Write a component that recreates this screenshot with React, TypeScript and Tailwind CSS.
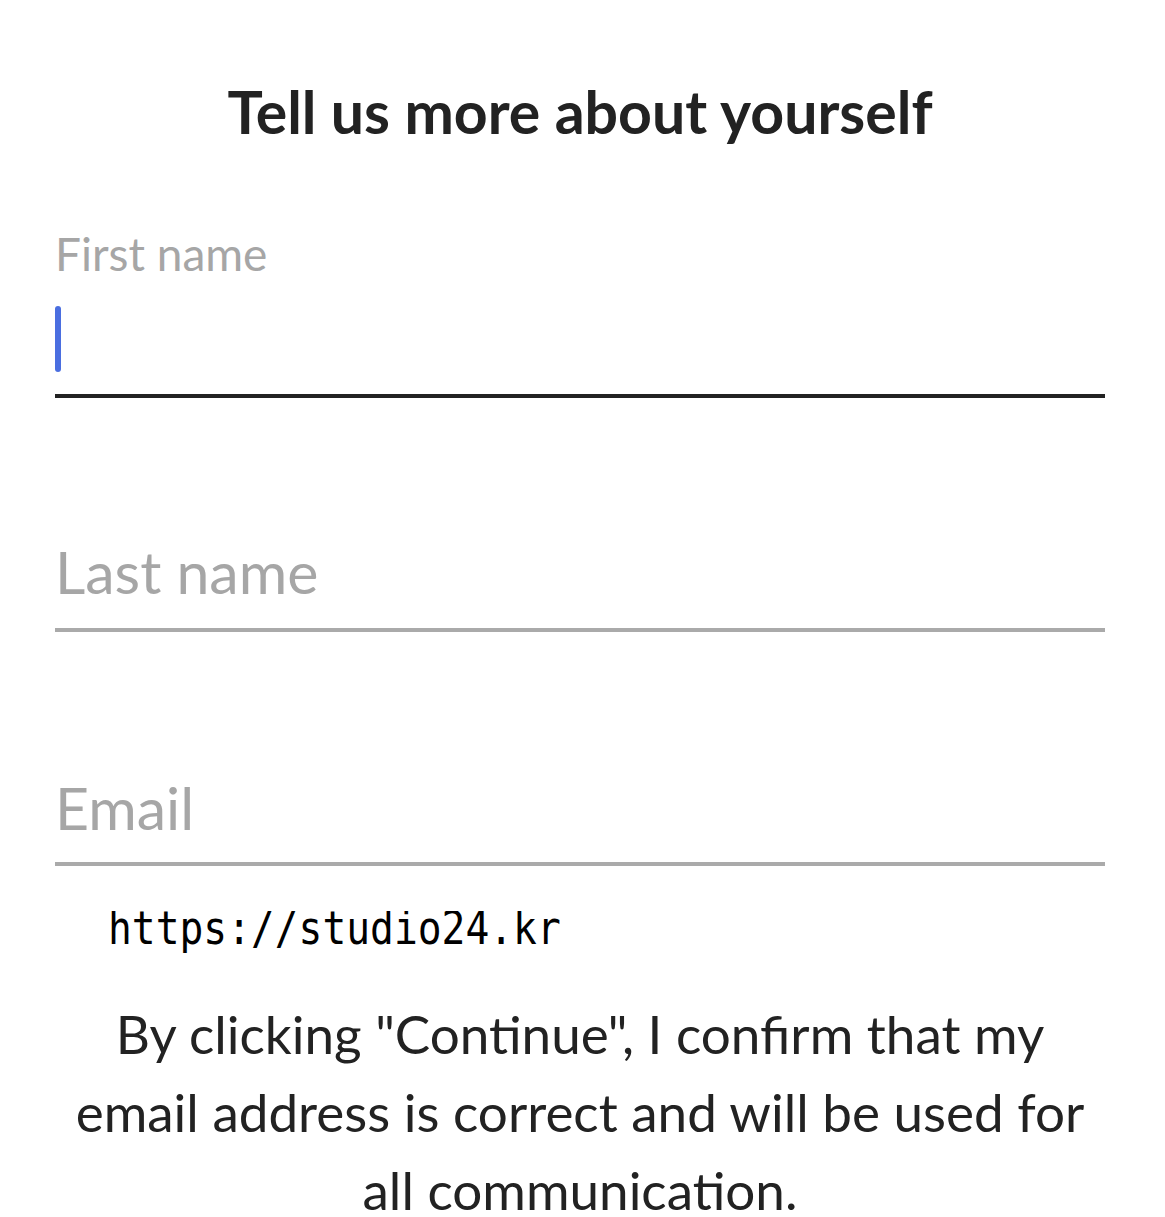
import React from "react";

export default function App() {
  const font = { fontFamily: "Lato, 'Noto Sans', sans-serif" };
  return (
    <div className="min-h-[1217px] bg-white overflow-hidden" style={font}>
      <div className="pl-[55px] pr-[60px] pt-[80px]">
        <h1 className="text-center text-[59px] leading-[64px] font-bold text-[#222]">
          Tell us more about yourself
        </h1>
        <div className="mt-[86px]">
          <div className="text-[46px] leading-[48px] text-[#a6a6a6]">First name</div>
          <div className="mt-[28px] h-[92px] border-b-4 border-[#222] flex items-start">
            <div className="w-[6px] h-[66px] rounded-full bg-[#4a6ee0]" />
          </div>
        </div>
        <div className="mt-[138px] h-[96px] border-b-4 border-[#aaa] flex items-end pb-[26px]">
          <span className="text-[59px] leading-[60px] text-[#a6a6a6]">Last name</span>
        </div>
        <div className="mt-[138px] h-[96px] border-b-4 border-[#aaa] flex items-end pb-[24px]">
          <span className="text-[59px] leading-[60px] text-[#a6a6a6]">Email</span>
        </div>
        <div className="mt-[45px] pl-[53px] h-[42px] overflow-hidden">
          <span
            className="inline-block text-[39.6px] leading-[40px] text-black origin-bottom scale-y-[1.15]"
            style={{ fontFamily: "'DejaVu Sans Mono', 'Liberation Mono', monospace" }}
          >
            https://studio24.kr
          </span>
        </div>
        <p className="mt-[42px] text-center text-[53px] leading-[78px] text-[#222] px-[8px]">
          By clicking "Continue", I confirm that my email address is correct and will be used for all communication.
        </p>
      </div>
    </div>
  );
}
